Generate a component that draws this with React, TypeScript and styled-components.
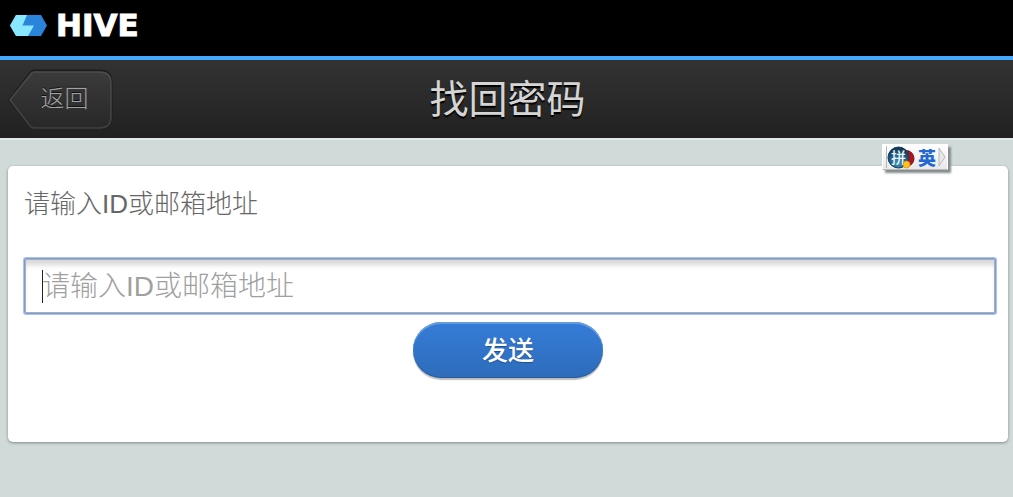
import React from "react";
import styled, { createGlobalStyle } from "styled-components";

const GlobalStyle = createGlobalStyle`
  *, *::before, *::after { box-sizing: border-box; }
  body {
    margin: 0;
    background: #d0dad8;
    font-family: "Liberation Sans", "Noto Sans CJK SC", sans-serif;
  }
`;

const Brand = styled.header`
  display: flex;
  align-items: flex-start;
  height: 60px;
  padding: 10px 10px 0;
  background: #000;
  border-bottom: 4px solid #44a9fc;
`;

const BrandLink = styled.a`
  display: flex;
  align-items: center;
  gap: 9px;
  height: 30px;
  color: #fff;
  text-decoration: none;
  font: 700 31px/30px "DejaVu Sans", sans-serif;
  -webkit-text-stroke: 1px #fff;
`;

const TitleBar = styled.div`
  display: grid;
  grid-template-columns: 1fr auto 1fr;
  align-items: center;
  height: 78px;
  padding: 0 8px;
  background: linear-gradient(#333, #212121);
  box-shadow: 0 2px 0 #e0e9e7;
`;

const BackButton = styled.button`
  display: grid;
  justify-self: start;
  width: 105px;
  height: 60px;
  padding: 0;
  border: 0;
  background: none;
  color: #a3a3a3;
  font: 300 24px/56px "Noto Sans CJK SC", sans-serif;
  text-shadow: 0 -1px 0 #111;
  cursor: pointer;

  > * { grid-area: 1 / 1; }
`;

const BackLabel = styled.span`
  padding-left: 8px;
  text-align: center;
`;

const Title = styled.h1`
  margin: 0;
  padding: 0 0 6px 2px;
  color: #d5d5d5;
  font: 400 39px/56px "Noto Sans CJK SC", sans-serif;
  text-shadow: 0 2px 1px #000;
`;

const Card = styled.form`
  display: flex;
  flex-direction: column;
  margin: 28px 5px 28px 8px;
  padding: 20px 12px 64px 16px;
  background: #fff;
  border-radius: 5px;
  box-shadow: 0 1px 3px #7d8987;
`;

const Label = styled.label`
  margin-bottom: 36px;
  color: #666;
  font-size: 26px;
  font-weight: 300;
  line-height: 36px;
`;

const Field = styled.div`
  position: relative;
  display: flex;

  &::after {
    content: "";
    position: absolute;
    left: 18px;
    top: 12px;
    width: 1px;
    height: 33px;
    background: #222;
  }
`;

const Input = styled.input`
  width: 100%;
  height: 56px;
  padding: 2px 17px 0;
  border: 1px solid #7b9be0;
  border-radius: 2px;
  outline: 0;
  background: #fff;
  box-shadow: 0 0 0 1px #a6c5fa, inset 0 0 0 1px #b0aeaa, inset 0 7px 5px -1px #d8d8d8;
  color: #333;
  caret-color: transparent;
  font: 300 28px "Liberation Sans", "Noto Sans CJK SC", sans-serif;

  &::placeholder { color: #a0a0a0; opacity: 1; }
`;

const Submit = styled.button`
  align-self: center;
  width: 190px;
  height: 56px;
  margin: 8px 4px 0 0;
  padding: 0 0 2px;
  border: 0;
  border-radius: 28px;
  background: linear-gradient(#357cd8, #2e6cba);
  box-shadow: 0 2px 1px #bdbdbd, inset 0 2px 0 #669ce0, inset 0 -1px 0 #265a9c;
  color: #fff;
  font: 500 26px/52px "Noto Sans CJK SC", sans-serif;
  text-shadow: 0 1px 1px #1d4f8f;
  cursor: pointer;
`;

const InputMethod = styled.aside`
  position: absolute;
  top: 144px;
  right: 65px;
  display: flex;
  align-items: center;
  width: 66px;
  height: 26px;
  border: 1px solid #fff;
  border-bottom-color: #bbb;
  background: linear-gradient(#fff, #e9e9e9);
  box-shadow: 3px 3px 2px #858d8c;
`;

const Language = styled.span`
  margin: 0 2px 0 3px;
  color: #2268d2;
  font: 900 18px/22px "Noto Sans CJK SC", sans-serif;
`;

function HiveMark() {
  return (
    <svg width="37" height="21" viewBox="0 0 37 21" aria-hidden="true">
      <path d="M6 0H31L37 10.5L31 21H6L0 10.5Z" fill="#2a84da" />
      <path d="M6 0H17L12.5 10.5H24L18 21H6L0 10.5Z" fill="#89e7ff" />
    </svg>
  );
}

function BackShape() {
  return (
    <svg width="105" height="60" viewBox="0 0 105 60" aria-hidden="true">
      <defs>
        <linearGradient id="backFill" x1="0" y1="0" x2="0" y2="1">
          <stop offset="0" stopColor="#3b3b3b" />
          <stop offset="1" stopColor="#282828" />
        </linearGradient>
        <linearGradient id="backEdge" x1="0" y1="0" x2="0" y2="1">
          <stop offset="0" stopColor="#4c4c4c" />
          <stop offset="1" stopColor="#404040" />
        </linearGradient>
      </defs>
      <path d="M26 2H92Q103 2 103 13V48Q103 59 92 59H26Q24 59 22 57L2 31L22 5Q24 2 26 2Z" fill="none" stroke="#1d1d1d" strokeWidth="3" />
      <path d="M26 3H92Q103 3 103 14V48Q103 59 92 59H26Q24 59 22 57L2 31L22 6Q24 3 26 3Z" fill="url(#backFill)" stroke="url(#backEdge)" strokeWidth="1.5" />
    </svg>
  );
}

function PinyinIcon() {
  return (
    <svg width="32" height="24" viewBox="0 0 32 24" aria-hidden="true">
      <defs>
        <radialGradient id="globe" cx=".5" cy=".75" r=".7">
          <stop offset="0" stopColor="#3c94bd" />
          <stop offset="1" stopColor="#123755" />
        </radialGradient>
      </defs>
      <path d="M3.5 1V23" stroke="#b7b7b7" />
      <circle cx="23" cy="13.5" r="8" fill="#b9101d" stroke="#5d1a22" />
      <circle cx="15.5" cy="12.5" r="10.5" fill="url(#globe)" stroke="#173c57" />
      <text x="8" y="18" fontSize="15" fontWeight="500" fill="#eaf6fc" fontFamily="Noto Sans CJK SC, sans-serif">拼</text>
      <circle cx="23.5" cy="19.5" r="3.5" fill="#ffc11e" stroke="#d58b14" strokeWidth=".7" />
    </svg>
  );
}

function Chevron() {
  return (
    <svg width="8" height="22" viewBox="0 0 8 22" aria-hidden="true">
      <path d="M1 2L7 11L1 20Z" fill="#e8e8e8" stroke="#b9b9b9" />
    </svg>
  );
}

export default function App() {
  return (
    <>
      <GlobalStyle />
      <Brand>
        <BrandLink href="#"><HiveMark />HIVE</BrandLink>
      </Brand>
      <TitleBar>
        <BackButton type="button">
          <BackShape />
          <BackLabel>返回</BackLabel>
        </BackButton>
        <Title>找回密码</Title>
      </TitleBar>
      <Card onSubmit={(event: React.FormEvent) => event.preventDefault()}>
        <Label htmlFor="account">请输入ID或邮箱地址</Label>
        <Field>
          <Input id="account" type="text" placeholder="请输入ID或邮箱地址" />
        </Field>
        <Submit type="submit">发送</Submit>
      </Card>
      <InputMethod>
        <PinyinIcon />
        <Language>英</Language>
        <Chevron />
      </InputMethod>
    </>
  );
}
